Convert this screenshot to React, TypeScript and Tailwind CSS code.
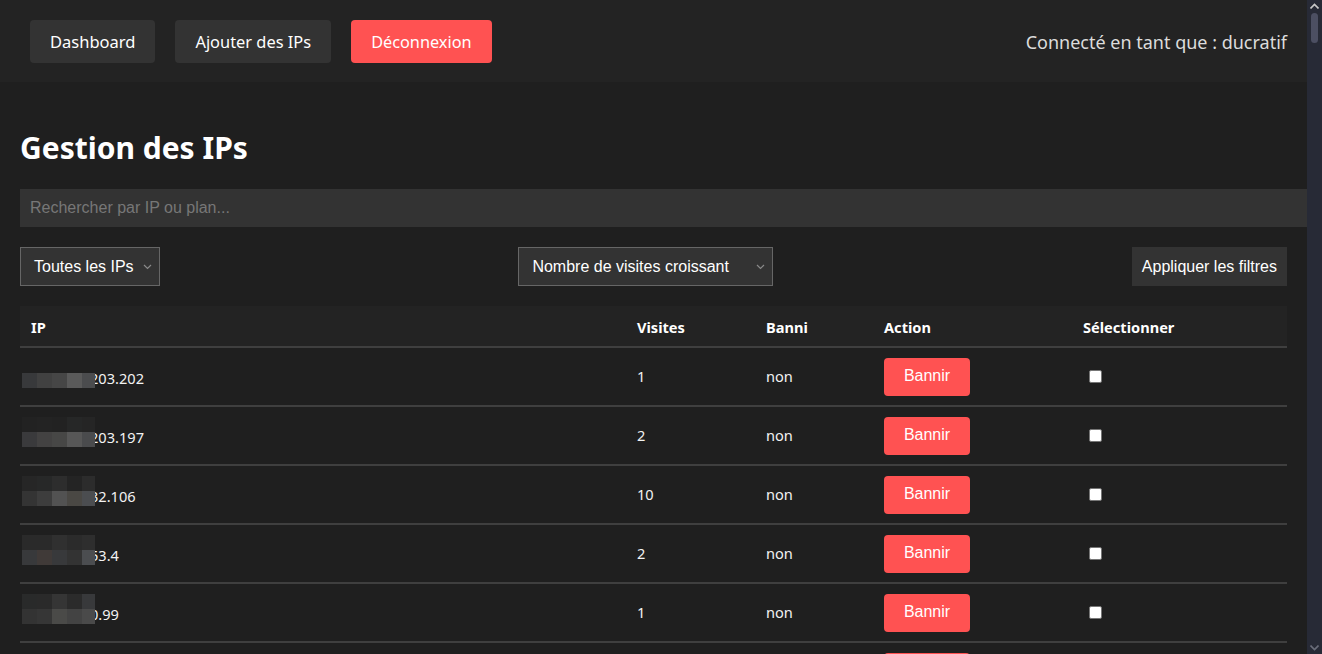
import React from "react";

type Row = {
  ip: string;
  visits: number;
  banned: string;
  top: string[];
  bottom: string[];
};

const rows: Row[] = [
  {
    ip: "203.202",
    visits: 1,
    banned: "non",
    top: ["#1f1f1f", "#1f1f1f", "#1f1f1f", "#1f1f1f", "#1f1f1f"],
    bottom: ["#38393b", "#414141", "#464646", "#5a5a5a", "#4b4c4e"],
  },
  {
    ip: "203.197",
    visits: 2,
    banned: "non",
    top: ["#222222", "#232323", "#222222", "#262727", "#252525"],
    bottom: ["#3a3a3c", "#434242", "#474746", "#575757", "#4a4b4d"],
  },
  {
    ip: "32.106",
    visits: 10,
    banned: "non",
    top: ["#262626", "#272828", "#2d2d2d", "#242424", "#2c2c2c"],
    bottom: ["#343434", "#3d3d3d", "#525252", "#4a4844", "#4b4d50"],
  },
  {
    ip: "53.4",
    visits: 2,
    banned: "non",
    top: ["#2a2a2a", "#2a2a2a", "#303030", "#2b2b2b", "#2e2e2e"],
    bottom: ["#38393b", "#403a38", "#38393b", "#333333", "#4b4d50"],
  },
  {
    ip: "0.99",
    visits: 1,
    banned: "non",
    top: ["#292a2a", "#2a2a2a", "#353535", "#2b2b2b", "#38393b"],
    bottom: ["#333333", "#363636", "#4a4a48", "#434343", "#4a4a4a"],
  },
  {
    ip: "118.44",
    visits: 3,
    banned: "non",
    top: ["#1f1f1f", "#1f1f1f", "#1f1f1f", "#1f1f1f", "#1f1f1f"],
    bottom: ["#363636", "#3d3d3d", "#484848", "#404040", "#4b4d50"],
  },
];

const cols = "grid grid-cols-[606px_129px_118px_199px_215px]";

function Chevron() {
  return (
    <svg width="9" height="6" viewBox="0 0 9 6" className="shrink-0">
      <path d="M1 1l3.5 3.5L8 1" fill="none" stroke="#8a8a8a" strokeWidth="1.2" />
    </svg>
  );
}

function Mosaic({ top, bottom }: { top: string[]; bottom: string[] }) {
  return (
    <div className="relative z-10 grid grid-cols-[repeat(5,15px)] grid-rows-[15px_15px] ml-[2px] w-[73px] overflow-hidden shrink-0">
      {[...top, ...bottom].map((c, i) => (
        <div key={i} style={{ backgroundColor: c }} />
      ))}
    </div>
  );
}

export default function App() {
  return (
    <div className="flex h-[654px] w-full overflow-hidden bg-[#1f1f1f] font-['Noto_Sans',sans-serif] text-[#f2f2f2]">
      <div className="flex-1 min-w-0">
        <header className="flex h-[82px] items-center justify-between bg-[#232323] pl-[30px] pr-5">
          <nav className="flex gap-5">
            <button className="h-[43px] rounded-[4px] bg-[#333333] px-5 pt-[3px] text-[16.5px] text-white">Dashboard</button>
            <button className="h-[43px] rounded-[4px] bg-[#333333] px-5 pt-[3px] text-[16.4px] text-white">Ajouter des IPs</button>
            <button className="h-[43px] rounded-[4px] bg-[#ff5252] px-5 pt-[3px] text-[16.3px] text-white">Déconnexion</button>
          </nav>
          <span className="pt-[3px] text-[18px] text-[#dcdcdc]">Connecté en tant que : ducratif</span>
        </header>

        <main className="px-5">
          <h1 className="mt-[46px] text-[30px] font-bold leading-[40px] text-white">Gestion des IPs</h1>
          <input
            className="mt-[21px] h-[38px] w-[calc(100%+20px)] bg-[#333333] px-[10px] font-['Liberation_Sans',sans-serif] text-[16px] text-white outline-none placeholder:text-[#777777]"
            placeholder="Rechercher par IP ou plan..."
          />

          <div className="mt-5 flex items-center justify-between font-['Liberation_Sans',sans-serif] text-[16px] text-white">
            <div className="flex h-[39px] w-[140px] items-center justify-between border border-[#666666] bg-[#333333] pl-[13px] pr-[7px]">
              <span>Toutes les IPs</span>
              <Chevron />
            </div>
            <div className="flex h-[39px] w-[255px] items-center justify-between border border-[#666666] bg-[#333333] pl-[13px] pr-[7px]">
              <span>Nombre de visites croissant</span>
              <Chevron />
            </div>
            <button className="h-[39px] bg-[#333333] px-[10px]">Appliquer les filtres</button>
          </div>

          <div className="mt-5 text-[14.6px]">
            <div className={`${cols} h-[42px] items-center border-b-2 border-[#3f3f3f] bg-[#232323] pt-[3px] font-bold text-white`}>
              <div className="pl-[11px]">IP</div>
              <div className="pl-[11px]">Visites</div>
              <div className="pl-[11px]">Banni</div>
              <div className="pl-[11px]">Action</div>
              <div className="pl-[11px]">Sélectionner</div>
            </div>
            {rows.map((r, i) => (
              <div key={i} className={`${cols} h-[59px] items-center border-b-2 border-[#3f3f3f]`}>
                <div className="flex items-end self-stretch pb-[17px]">
                  <Mosaic top={r.top} bottom={r.bottom} />
                  <span className="ml-[-5px] leading-[20px]">{r.ip}</span>
                </div>
                <div className="pl-[11px] pt-[1px]">{r.visits}</div>
                <div className="pl-[11px] pt-[1px]">{r.banned}</div>
                <div className="pl-[11px]">
                  <button className="h-[38px] w-[86px] rounded-[4px] bg-[#ff5252] pb-[1px] font-['Liberation_Sans',sans-serif] text-[16px] text-white">
                    Bannir
                  </button>
                </div>
                <div className="pl-[17px] pb-[1px]">
                  <div className="h-[13px] w-[13px] rounded-[2px] border border-[#767676] bg-white" />
                </div>
              </div>
            ))}
          </div>
        </main>
      </div>

      <div className="flex w-[15px] shrink-0 flex-col items-center justify-between bg-[#272a36] py-[3px]">
        <div className="flex flex-col items-center gap-[4px]">
          <svg width="9" height="6" viewBox="0 0 9 6">
            <path d="M0.5 5.5L4.5 1.5L8.5 5.5" fill="none" stroke="#c8c8c8" strokeWidth="1.6" />
          </svg>
          <div className="h-[30px] w-[7px] rounded-[4px] bg-[#4c4f62]" />
        </div>
        <svg width="9" height="6" viewBox="0 0 9 6">
          <path d="M0.5 0.5L4.5 4.5L8.5 0.5" fill="none" stroke="#6a6d7a" strokeWidth="1.6" />
        </svg>
      </div>
    </div>
  );
}
